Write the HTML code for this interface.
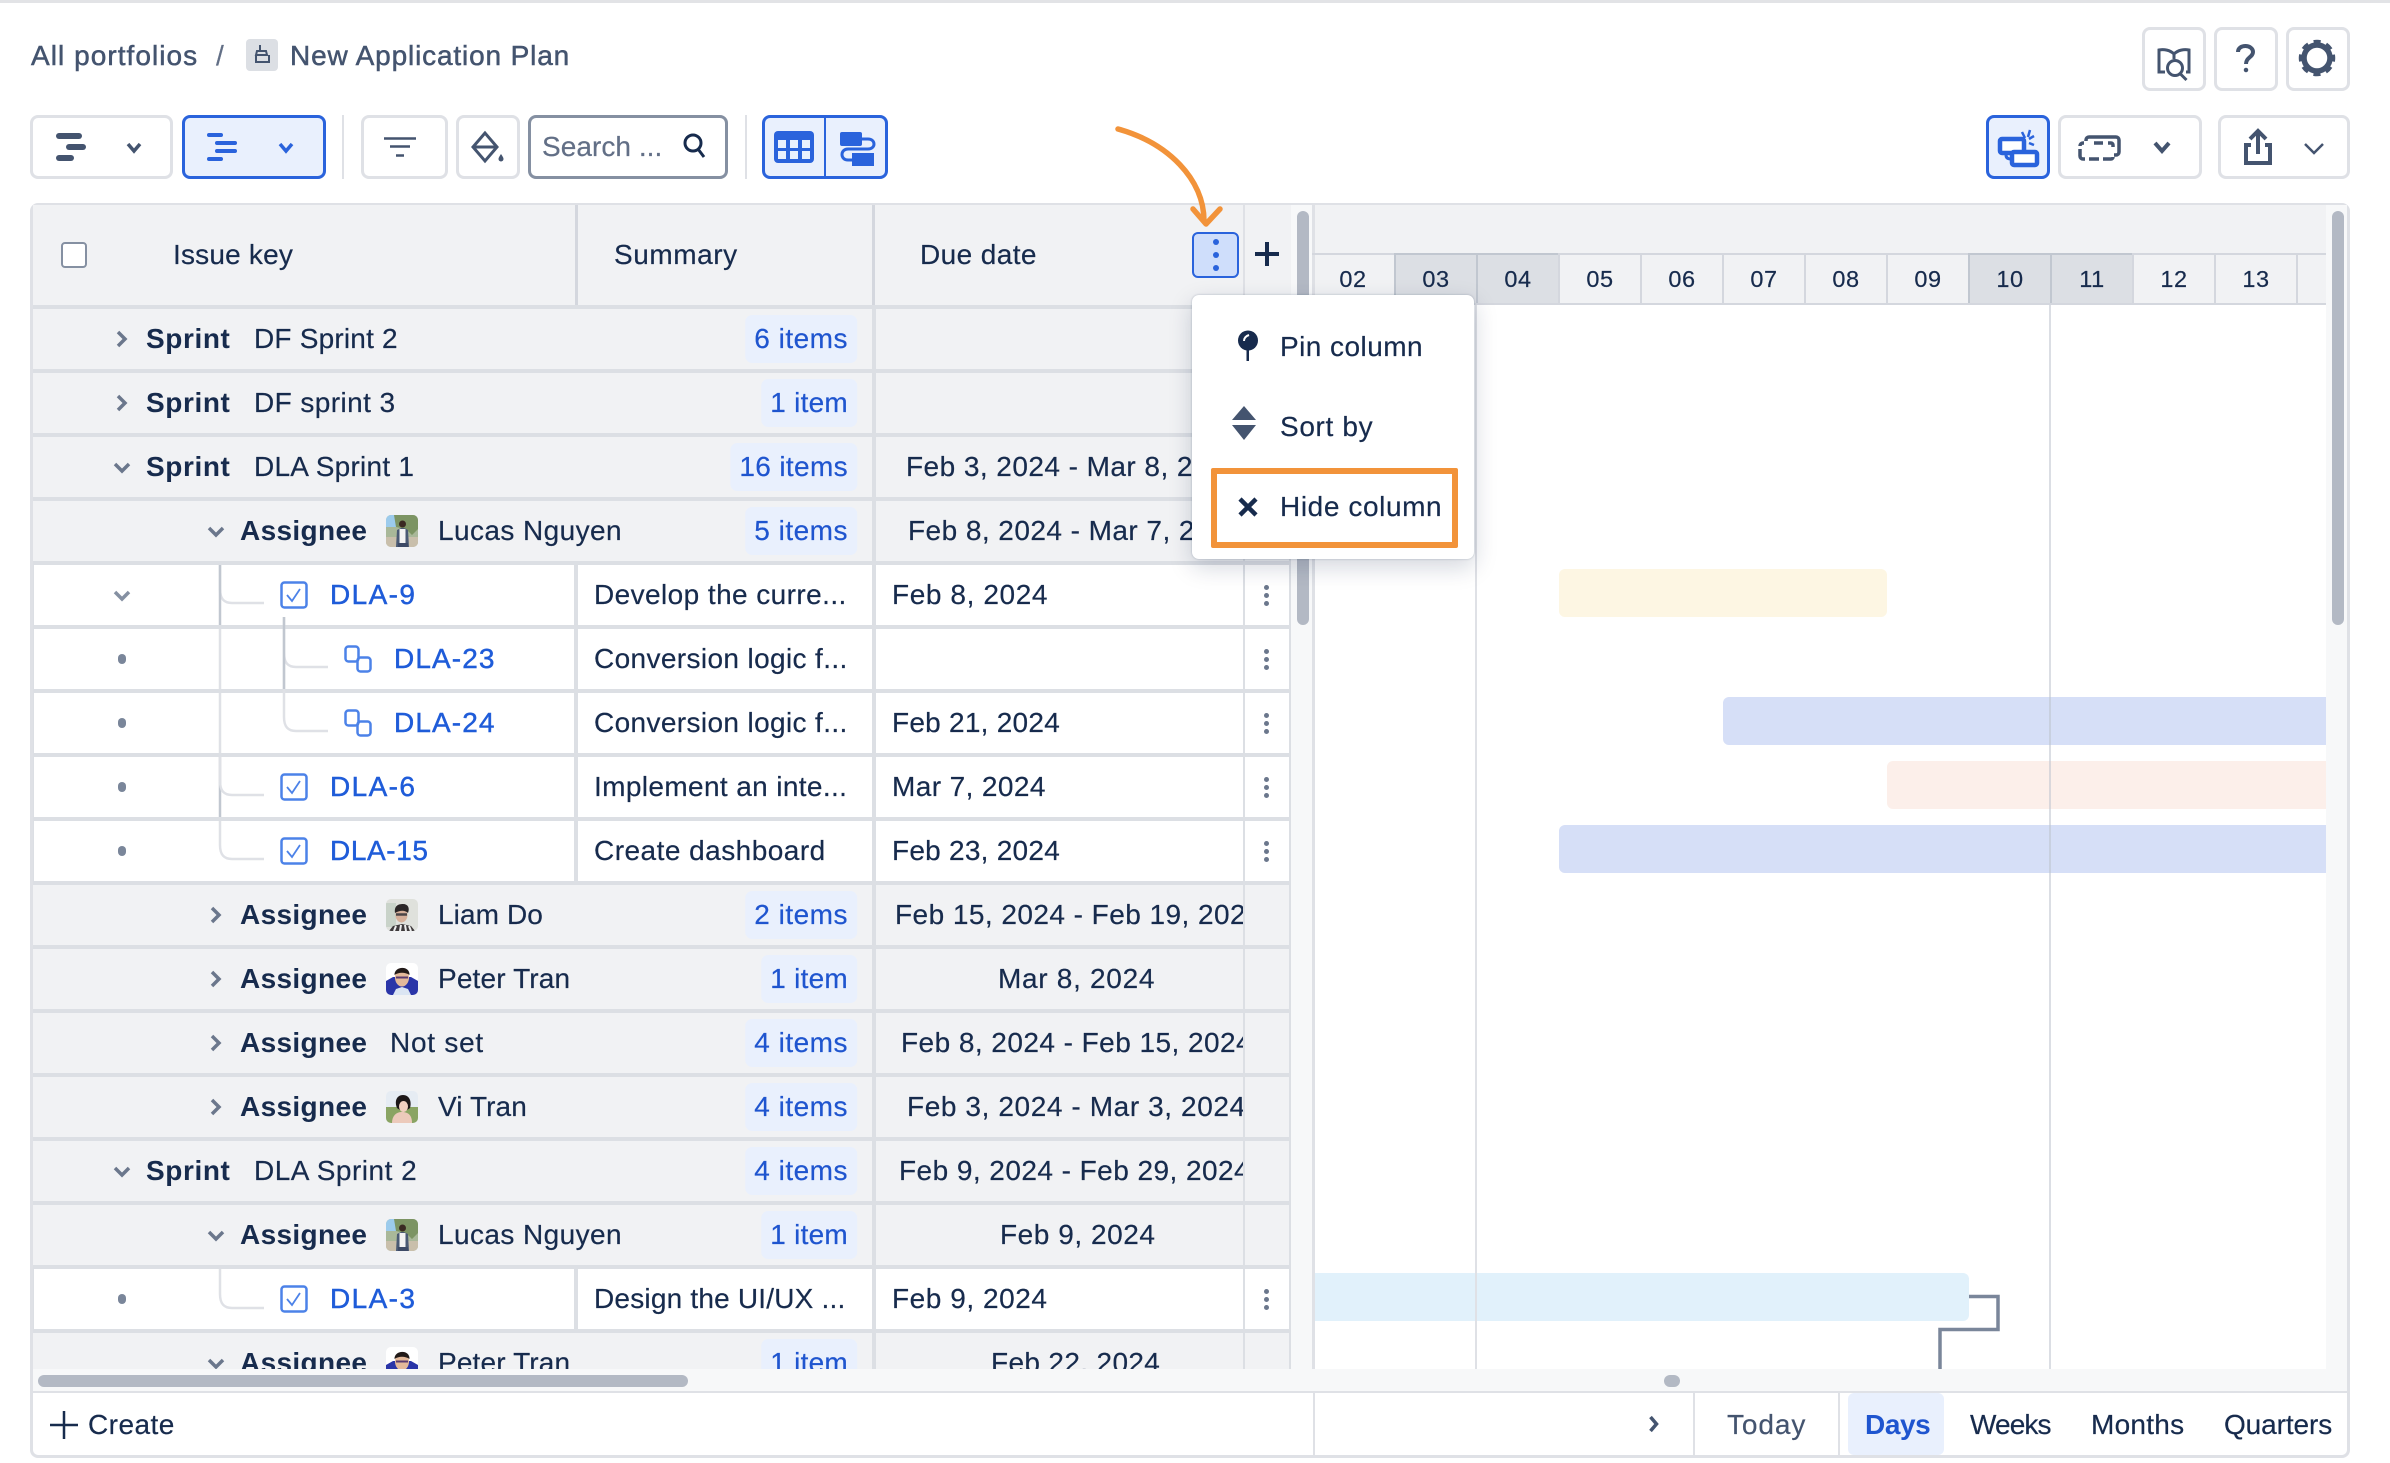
<!DOCTYPE html>
<html><head><meta charset="utf-8"><title>New Application Plan</title>
<style>
*{box-sizing:border-box}
html,body{margin:0;padding:0;width:2390px;height:1463px;background:#fff;overflow:hidden}
body{position:relative;font-family:"Liberation Sans",sans-serif;font-size:28px;color:#172b4d;letter-spacing:.42px;-webkit-text-stroke:.2px}
.a{position:absolute}
.t{position:absolute;white-space:nowrap;line-height:32px;top:14px}
.p{position:absolute;white-space:nowrap;line-height:32px}
.b{font-weight:700;letter-spacing:.35px;-webkit-text-stroke:0}
.s{letter-spacing:.6px}
.row{position:absolute;left:0;width:0;height:60px}
.bg{position:absolute;top:0;height:60px;background:#f1f2f4}
.w{background:#fff}
.badge{position:absolute;top:6px;left:857px;transform:translateX(-100%);height:48px;line-height:48px;padding:0 9px;border-radius:7px;background:#e9f0fd;color:#1f55cf;white-space:nowrap;letter-spacing:.5px}
.lnk{color:#1f5cd9;letter-spacing:.75px;-webkit-text-stroke:.45px}
.clip{position:absolute;top:14px;line-height:32px;white-space:nowrap;overflow:hidden}
.btn{position:absolute;border:3px solid #dfe1e6;border-radius:8px;background:#fff}
.on{border-color:#2a63dc;background:#e9f0fd}
svg{position:absolute;overflow:visible}
.cell{position:absolute;top:253px;height:52px;width:82px;border-left:2px solid #d4d7de;border-top:2px solid #d4d7de;text-align:center;font-size:23.5px;line-height:48px;letter-spacing:.6px}
.g{background:#dcdfe4;border-top-color:#c1c7d0;border-left-color:#c1c7d0}
</style></head><body>

<div class="a" style="left:0;top:0;width:2390px;height:3px;background:#e2e3e6"></div>

<!-- breadcrumb -->
<div class="p" style="left:31px;top:40px;color:#44546f;letter-spacing:1.05px;-webkit-text-stroke:.5px">All portfolios</div>
<div class="p" style="left:216px;top:40px;color:#626f86">/</div>
<div class="a" style="left:246px;top:39px;width:32px;height:32px;background:#dcdfe4;border-radius:4px"></div>
<svg style="left:246px;top:39px" width="32" height="32" fill="none" stroke="#44546f" stroke-width="2"><path d="M14 6v5M11 12h9l1 4H10zM10 16v7h13v-7"/></svg>
<div class="p" style="left:290px;top:40px;color:#44546f;letter-spacing:.85px;-webkit-text-stroke:.5px">New Application Plan</div>

<!-- top right buttons -->
<div class="btn" style="left:2142px;top:27px;width:64px;height:64px"></div>
<div class="btn" style="left:2214px;top:27px;width:64px;height:64px"></div>
<div class="btn" style="left:2286px;top:27px;width:64px;height:64px"></div>
<svg style="left:2156px;top:46px" width="36" height="36" fill="none" stroke="#44546f" stroke-width="3"><path d="M18 8C14 4 8 3 3 4v22h6M18 8c4-4 10-5 15-4v22h-3"/><path d="M18 8v5"/><circle cx="19" cy="22" r="7.500"/><path d="M24.500 28l6 6"/></svg>
<svg style="left:2234px;top:43px" width="26" height="30" fill="none" stroke="#44546f" stroke-width="4"><path d="M4 9c0-4 3.500-6 7.500-6S19 5.500 19 9c0 5-7 5.500-7 12"/><circle cx="12" cy="27" r="1.500" fill="#44546f" stroke-width="1.500"/></svg>
<svg style="left:2299px;top:40px" width="36" height="36" viewBox="-18 -18 36 36" fill="none" stroke="#44546f"><circle r="13" stroke-width="5.500"/><circle r="16.500" stroke-width="3.500" stroke-dasharray="7 5.960" stroke-dashoffset="3.500"/></svg>

<!-- toolbar -->
<div class="btn" style="left:30px;top:115px;width:143px;height:64px"></div>
<div class="a" style="left:56px;top:133px;width:26px;height:6px;border-radius:3px;background:#44546f"></div>
<div class="a" style="left:66px;top:144px;width:20px;height:6px;border-radius:3px;background:#44546f"></div>
<div class="a" style="left:56px;top:155px;width:18px;height:6px;border-radius:3px;background:#44546f"></div>
<svg style="left:126px;top:142px" width="16" height="12" fill="none" stroke="#44546f" stroke-width="3.500"><path d="M2 2l6 7 6-7"/></svg>

<div class="btn on" style="left:182px;top:115px;width:144px;height:64px"></div>
<div class="a" style="left:207px;top:133px;width:16px;height:4px;border-radius:2px;background:#2a63dc"></div>
<div class="a" style="left:215px;top:141px;width:22px;height:4px;border-radius:2px;background:#2a63dc"></div>
<div class="a" style="left:215px;top:149px;width:22px;height:4px;border-radius:2px;background:#2a63dc"></div>
<div class="a" style="left:207px;top:157px;width:16px;height:4px;border-radius:2px;background:#2a63dc"></div>
<svg style="left:278px;top:142px" width="16" height="12" fill="none" stroke="#2a63dc" stroke-width="3.500"><path d="M2 2l6 7 6-7"/></svg>

<div class="a" style="left:342px;top:115px;width:2px;height:64px;background:#dfe1e6"></div>

<div class="btn" style="left:361px;top:115px;width:87px;height:64px"></div>
<svg style="left:384px;top:136px" width="32" height="24" fill="none" stroke="#44546f" stroke-width="2.500"><path d="M0 2.500h32M6 10.500h20M12 19.500h8"/></svg>

<div class="btn" style="left:456px;top:115px;width:64px;height:64px"></div>
<svg style="left:470px;top:130px" width="36" height="36" fill="none" stroke="#44546f" stroke-width="3"><path d="M15 3L3 17l12 14 12-14z"/><path d="M3 17h24"/><path d="M31 24c-2 3-2.500 4-2.500 5a2.500 2.500 0 0 0 5 0c0-1-.5-2-2.500-5z" fill="#44546f" stroke="none"/></svg>

<div class="a" style="left:528px;top:115px;width:200px;height:64px;border:3px solid #8590a2;border-radius:8px;background:#fff"></div>
<div class="p" style="left:542px;top:131px;color:#626f86;letter-spacing:.05px">Search ...</div>
<svg style="left:682px;top:132px" width="26" height="28" fill="none" stroke="#172b4d" stroke-width="3"><circle cx="11" cy="11" r="8"/><path d="M16 17l6 8"/></svg>

<div class="a" style="left:745px;top:115px;width:2px;height:64px;background:#dfe1e6"></div>

<div class="a" style="left:762px;top:115px;width:126px;height:64px;border:3px solid #2a63dc;border-radius:8px;background:#e9f0fd"></div>
<div class="a" style="left:824px;top:115px;width:2px;height:64px;background:#2a63dc"></div>
<svg style="left:774px;top:131px" width="40" height="32"><rect width="40" height="32" rx="4" fill="#2a63dc"/><g fill="#e9f0fd"><rect x="4" y="9" width="8" height="8"/><rect x="16" y="9" width="8" height="8"/><rect x="28" y="9" width="8" height="8"/><rect x="4" y="20" width="8" height="8"/><rect x="16" y="20" width="8" height="8"/><rect x="28" y="20" width="8" height="8"/></g></svg>
<svg style="left:838px;top:130px" width="40" height="36" fill="none"><rect x="2" y="2" width="22" height="14" rx="2" fill="#2a63dc"/><rect x="14" y="23" width="22" height="13" fill="#2a63dc"/><path d="M24 9h6c8 0 8 10 0 10H10c-8 0-8 11 0 11h4" stroke="#2a63dc" stroke-width="3"/></svg>

<div class="btn on" style="left:1986px;top:115px;width:64px;height:64px"></div>
<svg style="left:1996px;top:128px" width="46" height="40" fill="none" stroke="#2a63dc"><rect x="4" y="11" width="24" height="14" rx="2" stroke-width="4.500" fill="#fff"/><rect x="16" y="24" width="25" height="13" rx="2" stroke-width="4.500" fill="#fff"/><path d="M10 27c0 3 2 4 5 4" stroke-width="3"/><path d="M26 4l3 6M34 2l-2 7M38 8l-5 3M38 17l-5-2" stroke-width="2.500"/></svg>

<div class="btn" style="left:2058px;top:115px;width:144px;height:64px"></div>
<svg style="left:2078px;top:134px" width="44" height="28" fill="none" stroke="#44546f" stroke-width="3.500"><path d="M8 7V6a3 3 0 0 1 3-3h27a3 3 0 0 1 3 3v12a3 3 0 0 1-3 3h-2"/><path d="M2 12a3 3 0 0 1 3-3h1M2 15v7a3 3 0 0 0 3 3h2M11 25h10M25 25h8a2 2 0 0 0 2-2M16 9h9M30 9h3a2 2 0 0 1 2 2v2"/></svg>
<svg style="left:2153px;top:141px" width="18" height="14" fill="none" stroke="#44546f" stroke-width="4"><path d="M2 2l7 8 7-8"/></svg>

<div class="btn" style="left:2218px;top:115px;width:132px;height:64px"></div>
<svg style="left:2243px;top:128px" width="30" height="38" fill="none" stroke="#44546f" stroke-width="4"><path d="M8 17H3v18h24V17h-5"/><path d="M15 26V3M7 11l8-8 8 8"/></svg>
<svg style="left:2303px;top:142px" width="22" height="14" fill="none" stroke="#44546f" stroke-width="2.500"><path d="M2 2l9 9 9-9"/></svg>

<!-- grid frame -->
<div class="a" style="left:30px;top:203px;width:2320px;height:1255px;border:3px solid #dfe1e6;border-radius:8px;background:#f7f8f9"></div>

<div class="a" style="left:0;top:0;width:2390px;height:1369px;overflow:hidden">
 <div class="a" style="left:33px;top:205px;width:1258px;height:1164px;background:#dcdfe4"></div>

 <!-- header -->
 <div class="a" style="left:33px;top:205px;width:1258px;height:100px;background:#f1f2f4"></div>
 <div class="a" style="left:575px;top:205px;width:3px;height:100px;background:#d4d7de"></div>
 <div class="a" style="left:872px;top:205px;width:3px;height:100px;background:#d4d7de"></div>
 <div class="a" style="left:1243px;top:205px;width:2px;height:100px;background:#dfe1e6"></div>
 <div class="a" style="left:61px;top:242px;width:26px;height:26px;border:2px solid #8590a2;border-radius:4px;background:#fff"></div>
 <div class="p" style="left:173px;top:239px;letter-spacing:.2px">Issue key</div>
 <div class="p" style="left:614px;top:239px;letter-spacing:.55px">Summary</div>
 <div class="p" style="left:920px;top:239px;letter-spacing:.4px">Due date</div>
 <div class="a" style="left:1192px;top:232px;width:47px;height:46px;border:2.500px solid #2a63dc;border-radius:6px;background:#cfdefb"></div>
 <div class="a" style="left:1213px;top:239px;width:6px;height:6px;border-radius:3px;background:#2a63dc"></div>
 <div class="a" style="left:1213px;top:252px;width:6px;height:6px;border-radius:3px;background:#2a63dc"></div>
 <div class="a" style="left:1213px;top:265px;width:6px;height:6px;border-radius:3px;background:#2a63dc"></div>
 <svg style="left:1255px;top:242px" width="24" height="24" fill="none" stroke="#172b4d" stroke-width="4"><path d="M12 0v24M0 12h24"/></svg>

 <!-- rows -->
 <div class="row" style="top:309px"><div class="bg" style="left:33px;width:839px"></div><div class="bg" style="left:876px;width:367px"></div><div class="bg" style="left:1245px;width:44px"></div>
  <svg style="left:116px;top:21px" width="12" height="18" fill="none" stroke="#6b778c" stroke-width="3.500"><path d="M2 2l7 7-7 7"/></svg>
  <div class="t b s" style="left:146px">Sprint</div><div class="t" style="left:254px;letter-spacing:.2px">DF Sprint 2</div><div class="badge">6 items</div></div>

 <div class="row" style="top:373px"><div class="bg" style="left:33px;width:839px"></div><div class="bg" style="left:876px;width:367px"></div><div class="bg" style="left:1245px;width:44px"></div>
  <svg style="left:116px;top:21px" width="12" height="18" fill="none" stroke="#6b778c" stroke-width="3.500"><path d="M2 2l7 7-7 7"/></svg>
  <div class="t b s" style="left:146px">Sprint</div><div class="t" style="left:254px">DF sprint 3</div><div class="badge" style="letter-spacing:.25px">1 item</div></div>

 <div class="row" style="top:437px"><div class="bg" style="left:33px;width:839px"></div><div class="bg" style="left:876px;width:367px"></div><div class="bg" style="left:1245px;width:44px"></div>
  <svg style="left:113px;top:25px" width="18" height="12" fill="none" stroke="#6b778c" stroke-width="3.500"><path d="M2 2l7 7 7-7"/></svg>
  <div class="t b s" style="left:146px">Sprint</div><div class="t" style="left:254px;letter-spacing:.25px">DLA Sprint 1</div><div class="badge" style="letter-spacing:.35px">16 items</div>
  <div class="clip" style="left:906px;width:337px;letter-spacing:.45px">Feb 3, 2024 - Mar 8, 2024</div></div>

 <div class="row" style="top:501px"><div class="bg" style="left:33px;width:839px"></div><div class="bg" style="left:876px;width:367px"></div><div class="bg" style="left:1245px;width:44px"></div>
  <svg style="left:207px;top:25px" width="18" height="12" fill="none" stroke="#6b778c" stroke-width="3.500"><path d="M2 2l7 7 7-7"/></svg>
  <div class="t b" style="left:240px">Assignee</div>
  <svg style="left:386px;top:14px;border-radius:5px;overflow:hidden" width="32" height="32"><rect width="32" height="32" fill="#a9b899"/><rect width="14" height="12" fill="#9ccbec"/><path d="M8 0h24v14l-6 6-6-6-10-2z" fill="#7c9463"/><rect y="22" width="32" height="10" fill="#c9bfab"/><path d="M10 32l1-17 4-2h3l4 2 1 17z" fill="#4a5a74"/><rect x="13.500" y="14" width="6" height="14" fill="#f3f3f3"/><rect x="12" y="28" width="10" height="4" fill="#3d4a66"/><circle cx="16.500" cy="9" r="3.500" fill="#3a2a22"/></svg>
  <div class="t" style="left:438px">Lucas Nguyen</div><div class="badge">5 items</div>
  <div class="clip" style="left:908px;width:335px;letter-spacing:.45px">Feb 8, 2024 - Mar 7, 2024</div></div>

 <div class="row" style="top:565px"><div class="bg w" style="left:34px;width:540px"></div><div class="bg w" style="left:578px;width:294px"></div><div class="bg w" style="left:876px;width:367px"></div><div class="bg w" style="left:1245px;width:44px"></div>
  <svg style="left:113px;top:25px" width="18" height="12" fill="none" stroke="#8590a2" stroke-width="3.500"><path d="M2 2l7 7 7-7"/></svg>
  <svg style="left:280px;top:16px" width="28" height="28" fill="none"><rect x="1.500" y="1.500" width="25" height="25" rx="3" stroke="#4c82e8" stroke-width="2.500"/><path d="M7 14l5 6 8-12" stroke="#4c82e8" stroke-width="1.800"/></svg>
  <div class="t lnk" style="left:330px;letter-spacing:1.4px">DLA-9</div><div class="t" style="left:594px">Develop the curre...</div><div class="t" style="left:892px;letter-spacing:.6px">Feb 8, 2024</div>
  <svg style="left:1264px;top:20px" width="5" height="22" fill="#6b778c"><circle cx="2.500" cy="2.500" r="2.500"/><circle cx="2.500" cy="10.500" r="2.500"/><circle cx="2.500" cy="18.500" r="2.500"/></svg></div>

 <div class="row" style="top:629px"><div class="bg w" style="left:34px;width:540px"></div><div class="bg w" style="left:578px;width:294px"></div><div class="bg w" style="left:876px;width:367px"></div><div class="bg w" style="left:1245px;width:44px"></div>
  <div class="a" style="left:118px;top:25px;width:8px;height:10px;border-radius:5px;background:#7a869a"></div>
  <svg style="left:344px;top:16px" width="28" height="28" fill="none" stroke="#4c82e8" stroke-width="2.500"><rect x="1.500" y="1.500" width="13" height="15" rx="3"/><rect x="13.500" y="12.500" width="13" height="14" rx="3"/></svg>
  <div class="t lnk" style="left:394px;letter-spacing:1.1px">DLA-23</div><div class="t" style="left:594px;letter-spacing:.37px">Conversion logic f...</div>
  <svg style="left:1264px;top:20px" width="5" height="22" fill="#6b778c"><circle cx="2.500" cy="2.500" r="2.500"/><circle cx="2.500" cy="10.500" r="2.500"/><circle cx="2.500" cy="18.500" r="2.500"/></svg></div>

 <div class="row" style="top:693px"><div class="bg w" style="left:34px;width:540px"></div><div class="bg w" style="left:578px;width:294px"></div><div class="bg w" style="left:876px;width:367px"></div><div class="bg w" style="left:1245px;width:44px"></div>
  <div class="a" style="left:118px;top:25px;width:8px;height:10px;border-radius:5px;background:#7a869a"></div>
  <svg style="left:344px;top:16px" width="28" height="28" fill="none" stroke="#4c82e8" stroke-width="2.500"><rect x="1.500" y="1.500" width="13" height="15" rx="3"/><rect x="13.500" y="12.500" width="13" height="14" rx="3"/></svg>
  <div class="t lnk" style="left:394px;letter-spacing:1.1px">DLA-24</div><div class="t" style="left:594px;letter-spacing:.37px">Conversion logic f...</div><div class="t" style="left:892px;letter-spacing:.25px">Feb 21, 2024</div>
  <svg style="left:1264px;top:20px" width="5" height="22" fill="#6b778c"><circle cx="2.500" cy="2.500" r="2.500"/><circle cx="2.500" cy="10.500" r="2.500"/><circle cx="2.500" cy="18.500" r="2.500"/></svg></div>

 <div class="row" style="top:757px"><div class="bg w" style="left:34px;width:540px"></div><div class="bg w" style="left:578px;width:294px"></div><div class="bg w" style="left:876px;width:367px"></div><div class="bg w" style="left:1245px;width:44px"></div>
  <div class="a" style="left:118px;top:25px;width:8px;height:10px;border-radius:5px;background:#7a869a"></div>
  <svg style="left:280px;top:16px" width="28" height="28" fill="none"><rect x="1.500" y="1.500" width="25" height="25" rx="3" stroke="#4c82e8" stroke-width="2.500"/><path d="M7 14l5 6 8-12" stroke="#4c82e8" stroke-width="1.800"/></svg>
  <div class="t lnk" style="left:330px;letter-spacing:1.4px">DLA-6</div><div class="t" style="left:594px;letter-spacing:.37px">Implement an inte...</div><div class="t" style="left:892px;letter-spacing:.4px">Mar 7, 2024</div>
  <svg style="left:1264px;top:20px" width="5" height="22" fill="#6b778c"><circle cx="2.500" cy="2.500" r="2.500"/><circle cx="2.500" cy="10.500" r="2.500"/><circle cx="2.500" cy="18.500" r="2.500"/></svg></div>

 <div class="row" style="top:821px"><div class="bg w" style="left:34px;width:540px"></div><div class="bg w" style="left:578px;width:294px"></div><div class="bg w" style="left:876px;width:367px"></div><div class="bg w" style="left:1245px;width:44px"></div>
  <div class="a" style="left:118px;top:25px;width:8px;height:10px;border-radius:5px;background:#7a869a"></div>
  <svg style="left:280px;top:16px" width="28" height="28" fill="none"><rect x="1.500" y="1.500" width="25" height="25" rx="3" stroke="#4c82e8" stroke-width="2.500"/><path d="M7 14l5 6 8-12" stroke="#4c82e8" stroke-width="1.800"/></svg>
  <div class="t lnk" style="left:330px;letter-spacing:.6px">DLA-15</div><div class="t" style="left:594px;letter-spacing:.47px">Create dashboard</div><div class="t" style="left:892px;letter-spacing:.25px">Feb 23, 2024</div>
  <svg style="left:1264px;top:20px" width="5" height="22" fill="#6b778c"><circle cx="2.500" cy="2.500" r="2.500"/><circle cx="2.500" cy="10.500" r="2.500"/><circle cx="2.500" cy="18.500" r="2.500"/></svg></div>

 <div class="row" style="top:885px"><div class="bg" style="left:33px;width:839px"></div><div class="bg" style="left:876px;width:367px"></div><div class="bg" style="left:1245px;width:44px"></div>
  <svg style="left:210px;top:21px" width="12" height="18" fill="none" stroke="#6b778c" stroke-width="3.500"><path d="M2 2l7 7-7 7"/></svg>
  <div class="t b" style="left:240px">Assignee</div>
  <svg style="left:386px;top:14px;border-radius:5px;overflow:hidden" width="32" height="32"><rect width="32" height="32" fill="#dfe1dc"/><rect x="0" y="4" width="10" height="24" fill="#c9d3c9"/><path d="M3 32l4-5 9-2 9 2 4 5z" fill="#3e3a3c"/><path d="M8 32l2-5M14 32l1-6M20 32l-1-6M25 32l-2-5" stroke="#eee" stroke-width="2"/><ellipse cx="15.500" cy="16" rx="6" ry="7.500" fill="#d6b09a"/><path d="M9 14c-1-7 3-9 8-9s7 4 5 9c-3-3-8-3-13 0z" fill="#2b2627"/><path d="M10 15.500h11" stroke="#4a4446" stroke-width="2.500"/></svg>
  <div class="t" style="left:438px;letter-spacing:.1px">Liam Do</div><div class="badge">2 items</div>
  <div class="clip" style="left:895px;width:348px;letter-spacing:.45px">Feb 15, 2024 - Feb 19, 2024</div></div>

 <div class="row" style="top:949px"><div class="bg" style="left:33px;width:839px"></div><div class="bg" style="left:876px;width:367px"></div><div class="bg" style="left:1245px;width:44px"></div>
  <svg style="left:210px;top:21px" width="12" height="18" fill="none" stroke="#6b778c" stroke-width="3.500"><path d="M2 2l7 7-7 7"/></svg>
  <div class="t b" style="left:240px">Assignee</div>
  <svg style="left:386px;top:14px;border-radius:5px;overflow:hidden" width="32" height="32"><rect width="32" height="32" fill="#fff"/><path d="M0 32V18l7-4 18 0 7 4v14z" fill="#2a35a8"/><path d="M7 32l3-6 6-2 6 2 3 6z" fill="#dbe5f3"/><ellipse cx="16" cy="14.500" rx="7" ry="9" fill="#e4b99a"/><path d="M8.500 12C8 3 24 2 23.500 12c-4-3-11-3-15 0z" fill="#221a18"/><path d="M10 14.500h12" stroke="#5a3a6e" stroke-width="2"/></svg>
  <div class="t" style="left:438px;letter-spacing:.15px">Peter Tran</div><div class="badge" style="letter-spacing:.25px">1 item</div>
  <div class="clip" style="left:998px;width:245px;letter-spacing:.7px">Mar 8, 2024</div></div>

 <div class="row" style="top:1013px"><div class="bg" style="left:33px;width:839px"></div><div class="bg" style="left:876px;width:367px"></div><div class="bg" style="left:1245px;width:44px"></div>
  <svg style="left:210px;top:21px" width="12" height="18" fill="none" stroke="#6b778c" stroke-width="3.500"><path d="M2 2l7 7-7 7"/></svg>
  <div class="t b" style="left:240px">Assignee</div><div class="t" style="left:390px;letter-spacing:.75px">Not set</div><div class="badge">4 items</div>
  <div class="clip" style="left:901px;width:342px;letter-spacing:.45px">Feb 8, 2024 - Feb 15, 2024</div></div>

 <div class="row" style="top:1077px"><div class="bg" style="left:33px;width:839px"></div><div class="bg" style="left:876px;width:367px"></div><div class="bg" style="left:1245px;width:44px"></div>
  <svg style="left:210px;top:21px" width="12" height="18" fill="none" stroke="#6b778c" stroke-width="3.500"><path d="M2 2l7 7-7 7"/></svg>
  <div class="t b" style="left:240px">Assignee</div>
  <svg style="left:386px;top:14px;border-radius:5px;overflow:hidden" width="32" height="32"><rect width="32" height="32" fill="#e6ecf3"/><rect y="16" width="32" height="16" fill="#8aa463"/><path d="M6 32c0-7 4-11 10-11s10 3 10 11z" fill="#eccabb"/><path d="M11 17c-3-7 0-13 6-13s9 6 7 13c-3 3-10 3-13 0z" fill="#1c1718"/><ellipse cx="17.500" cy="15.500" rx="4.500" ry="5.500" fill="#f0cfc0"/></svg>
  <div class="t" style="left:438px;letter-spacing:.1px">Vi Tran</div><div class="badge">4 items</div>
  <div class="clip" style="left:907px;width:336px;letter-spacing:.6px">Feb 3, 2024 - Mar 3, 2024</div></div>

 <div class="row" style="top:1141px"><div class="bg" style="left:33px;width:839px"></div><div class="bg" style="left:876px;width:367px"></div><div class="bg" style="left:1245px;width:44px"></div>
  <svg style="left:113px;top:25px" width="18" height="12" fill="none" stroke="#6b778c" stroke-width="3.500"><path d="M2 2l7 7 7-7"/></svg>
  <div class="t b s" style="left:146px">Sprint</div><div class="t" style="left:254px;letter-spacing:.5px">DLA Sprint 2</div><div class="badge">4 items</div>
  <div class="clip" style="left:899px;width:344px;letter-spacing:.45px">Feb 9, 2024 - Feb 29, 2024</div></div>

 <div class="row" style="top:1205px"><div class="bg" style="left:33px;width:839px"></div><div class="bg" style="left:876px;width:367px"></div><div class="bg" style="left:1245px;width:44px"></div>
  <svg style="left:207px;top:25px" width="18" height="12" fill="none" stroke="#6b778c" stroke-width="3.500"><path d="M2 2l7 7 7-7"/></svg>
  <div class="t b" style="left:240px">Assignee</div>
  <svg style="left:386px;top:14px;border-radius:5px;overflow:hidden" width="32" height="32"><rect width="32" height="32" fill="#a9b899"/><rect width="14" height="12" fill="#9ccbec"/><path d="M8 0h24v14l-6 6-6-6-10-2z" fill="#7c9463"/><rect y="22" width="32" height="10" fill="#c9bfab"/><path d="M10 32l1-17 4-2h3l4 2 1 17z" fill="#4a5a74"/><rect x="13.500" y="14" width="6" height="14" fill="#f3f3f3"/><rect x="12" y="28" width="10" height="4" fill="#3d4a66"/><circle cx="16.500" cy="9" r="3.500" fill="#3a2a22"/></svg>
  <div class="t" style="left:438px">Lucas Nguyen</div><div class="badge" style="letter-spacing:.25px">1 item</div>
  <div class="clip" style="left:1000px;width:243px;letter-spacing:.55px">Feb 9, 2024</div></div>

 <div class="row" style="top:1269px"><div class="bg w" style="left:34px;width:540px"></div><div class="bg w" style="left:578px;width:294px"></div><div class="bg w" style="left:876px;width:367px"></div><div class="bg w" style="left:1245px;width:44px"></div>
  <div class="a" style="left:118px;top:25px;width:8px;height:10px;border-radius:5px;background:#7a869a"></div>
  <svg style="left:280px;top:16px" width="28" height="28" fill="none"><rect x="1.500" y="1.500" width="25" height="25" rx="3" stroke="#4c82e8" stroke-width="2.500"/><path d="M7 14l5 6 8-12" stroke="#4c82e8" stroke-width="1.800"/></svg>
  <div class="t lnk" style="left:330px;letter-spacing:1.4px">DLA-3</div><div class="t" style="left:594px;letter-spacing:.2px">Design the UI/UX ...</div><div class="t" style="left:892px;letter-spacing:.55px">Feb 9, 2024</div>
  <svg style="left:1264px;top:20px" width="5" height="22" fill="#6b778c"><circle cx="2.500" cy="2.500" r="2.500"/><circle cx="2.500" cy="10.500" r="2.500"/><circle cx="2.500" cy="18.500" r="2.500"/></svg></div>

 <div class="row" style="top:1333px"><div class="bg" style="left:33px;width:839px"></div><div class="bg" style="left:876px;width:367px"></div><div class="bg" style="left:1245px;width:44px"></div>
  <svg style="left:207px;top:25px" width="18" height="12" fill="none" stroke="#6b778c" stroke-width="3.500"><path d="M2 2l7 7 7-7"/></svg>
  <div class="t b" style="left:240px">Assignee</div>
  <svg style="left:386px;top:14px;border-radius:5px;overflow:hidden" width="32" height="32"><rect width="32" height="32" fill="#fff"/><path d="M0 32V18l7-4 18 0 7 4v14z" fill="#2a35a8"/><ellipse cx="16" cy="14.500" rx="7" ry="9" fill="#e4b99a"/><path d="M8.500 12C8 3 24 2 23.500 12c-4-3-11-3-15 0z" fill="#221a18"/><path d="M10 14.500h12" stroke="#5a3a6e" stroke-width="2"/></svg>
  <div class="t" style="left:438px;letter-spacing:.15px">Peter Tran</div><div class="badge" style="letter-spacing:.25px">1 item</div>
  <div class="clip" style="left:991px;width:252px;letter-spacing:.35px">Feb 22, 2024</div></div>

 <!-- tree lines -->
 <svg style="left:0;top:0" width="2390" height="1369" fill="none" stroke="#dfe1e6" stroke-width="2.500">
  <path d="M220 565v24c0 10 4 14 12 14h32"/>
  <path d="M220 565v60M220 757v60" stroke="#c1c7d0"/>
  <path d="M220 629v60M220 693v60M220 757v24c0 10 4 14 12 14h32M220 821v24c0 10 4 14 12 14h32"/>
  <path d="M284 617v36c0 10 4 14 12 14h32M284 693v24c0 10 4 14 12 14h32M284 629v64"/>
  <path d="M284 617v12M284 629v60" stroke="#c1c7d0"/>
  <path d="M220 1269v25c0 10 4 14 12 14h32"/>
 </svg>

 <!-- divider bar -->
 <div class="a" style="left:1291px;top:205px;width:21px;height:1164px;background:#f7f8f9"></div>
 <div class="a" style="left:1312px;top:205px;width:3px;height:1164px;background:#dfe1e6"></div>
 <div class="a" style="left:1297px;top:211px;width:12px;height:414px;border-radius:6px;background:#b3b9c4"></div>

 <!-- gantt -->
 <div class="a" style="left:1315px;top:205px;width:1011px;height:1164px;background:#fff"></div>
 <div class="a" style="left:1315px;top:205px;width:1011px;height:100px;background:#f1f2f4"></div>
 <div class="a" style="left:1312px;top:253px;width:1014px;height:2px;background:#d4d7de"></div>
 <div class="cell" style="left:1312px;border-left:0">02</div>
 <div class="cell g" style="left:1394px">03</div>
 <div class="cell g" style="left:1476px">04</div>
 <div class="cell" style="left:1558px">05</div>
 <div class="cell" style="left:1640px">06</div>
 <div class="cell" style="left:1722px">07</div>
 <div class="cell" style="left:1804px">08</div>
 <div class="cell" style="left:1886px">09</div>
 <div class="cell g" style="left:1968px">10</div>
 <div class="cell g" style="left:2050px">11</div>
 <div class="cell" style="left:2132px">12</div>
 <div class="cell" style="left:2214px">13</div>
 <div class="cell" style="left:2296px;width:30px"></div>
 <div class="a" style="left:1312px;top:303px;width:1014px;height:2px;background:#d4d7de"></div>

 <div class="a" style="left:1559px;top:569px;width:328px;height:48px;border-radius:6px;background:#fdf6e3"></div>
 <div class="a" style="left:1723px;top:697px;width:603px;height:48px;border-radius:6px 0 0 6px;background:#d6dff7"></div>
 <div class="a" style="left:1887px;top:761px;width:439px;height:48px;border-radius:6px 0 0 6px;background:#fcefea"></div>
 <div class="a" style="left:1559px;top:825px;width:767px;height:48px;border-radius:6px 0 0 6px;background:#d6dff7"></div>
 <div class="a" style="left:1315px;top:1273px;width:654px;height:48px;border-radius:0 6px 6px 0;background:#e1f1fb"></div>
 <div class="a" style="left:1475px;top:305px;width:2px;height:1064px;background:#dfe1e6"></div>
 <div class="a" style="left:2049px;top:305px;width:2px;height:1064px;background:rgba(190,195,205,.55)"></div>
 <svg style="left:1930px;top:1285px" width="80" height="90" fill="none" stroke="#7a869a" stroke-width="3.500"><path d="M39 11.500h29v33H10V84"/></svg>

 <!-- gantt right scrollbar -->
 <div class="a" style="left:2326px;top:205px;width:21px;height:1164px;background:#f7f8f9"></div>
 <div class="a" style="left:2332px;top:211px;width:12px;height:414px;border-radius:6px;background:#b3b9c4"></div>
</div>

<!-- bottom scrollbars -->
<div class="a" style="left:33px;top:1369px;width:2314px;height:22px;background:#f7f8f9"></div>
<div class="a" style="left:38px;top:1375px;width:650px;height:12px;border-radius:6px;background:#b3b9c4"></div>
<div class="a" style="left:1664px;top:1375px;width:16px;height:12px;border-radius:6px;background:#b3b9c4"></div>

<!-- footer -->
<div class="a" style="left:33px;top:1391px;width:2314px;height:64px;background:#fff;border-top:2.500px solid #dfe1e6;border-radius:0 0 6px 6px"></div>
<svg style="left:50px;top:1411px" width="28" height="28" fill="none" stroke="#172b4d" stroke-width="2.500"><path d="M14 0v28M0 14h28"/></svg>
<div class="p" style="left:88px;top:1409px;letter-spacing:.45px">Create</div>
<div class="a" style="left:1313px;top:1391px;width:2px;height:64px;background:#dfe1e6"></div>
<svg style="left:1648px;top:1415px" width="12" height="18" fill="none" stroke="#44546f" stroke-width="3.500"><path d="M2.500 2l6 7-6 7"/></svg>
<div class="a" style="left:1693px;top:1393px;width:2px;height:62px;background:#dfe1e6"></div>
<div class="p" style="left:1727px;top:1409px;color:#44546f;letter-spacing:.9px">Today</div>
<div class="a" style="left:1838px;top:1393px;width:2px;height:62px;background:#dfe1e6"></div>
<div class="a" style="left:1848px;top:1393px;width:96px;height:62px;background:#e9f0fd;border-radius:6px"></div>
<div class="p b" style="left:1865px;top:1409px;color:#1f55cf;letter-spacing:-.4px">Days</div>
<div class="p" style="left:1970px;top:1409px;letter-spacing:-.9px">Weeks</div>
<div class="p" style="left:2091px;top:1409px;letter-spacing:.25px">Months</div>
<div class="p" style="left:2224px;top:1409px;letter-spacing:-.1px">Quarters</div>

<!-- arrow -->
<svg style="left:0;top:0" width="2390" height="300" fill="none" stroke="#f2933a" stroke-width="5.500" stroke-linecap="round" stroke-linejoin="round"><path d="M1118 129c50 14 86 50 86 92"/><path d="M1193 209l13 15 14-15"/></svg>

<!-- menu -->
<div class="a" style="left:1192px;top:295px;width:282px;height:264px;background:#fff;border-radius:7px;box-shadow:0 8px 24px rgba(9,30,66,.18),0 0 2px rgba(9,30,66,.25)"></div>
<svg style="left:1236px;top:330px" width="24" height="32" fill="#172b4d"><circle cx="12" cy="10.500" r="10"/><rect x="10.500" y="18" width="2.500" height="13"/><path d="M8 11c0-3 2-5 5-6" stroke="#fff" stroke-width="2" fill="none"/></svg>
<div class="p" style="left:1280px;top:331px;letter-spacing:.45px">Pin column</div>
<svg style="left:1232px;top:406px" width="24" height="34" fill="#44546f"><path d="M12 0l12 14H0zM0 19h24L12 34z"/></svg>
<div class="p" style="left:1280px;top:411px;letter-spacing:.65px">Sort by</div>
<div class="a" style="left:1211px;top:468px;width:247px;height:80px;border:6px solid #f2933a;border-radius:2px"></div>
<svg style="left:1238px;top:497px" width="20" height="20" fill="none" stroke="#172b4d" stroke-width="4.500"><path d="M2 2l16 16M18 2L2 18"/></svg>
<div class="p" style="left:1280px;top:491px;letter-spacing:.6px">Hide column</div>

</body></html>
